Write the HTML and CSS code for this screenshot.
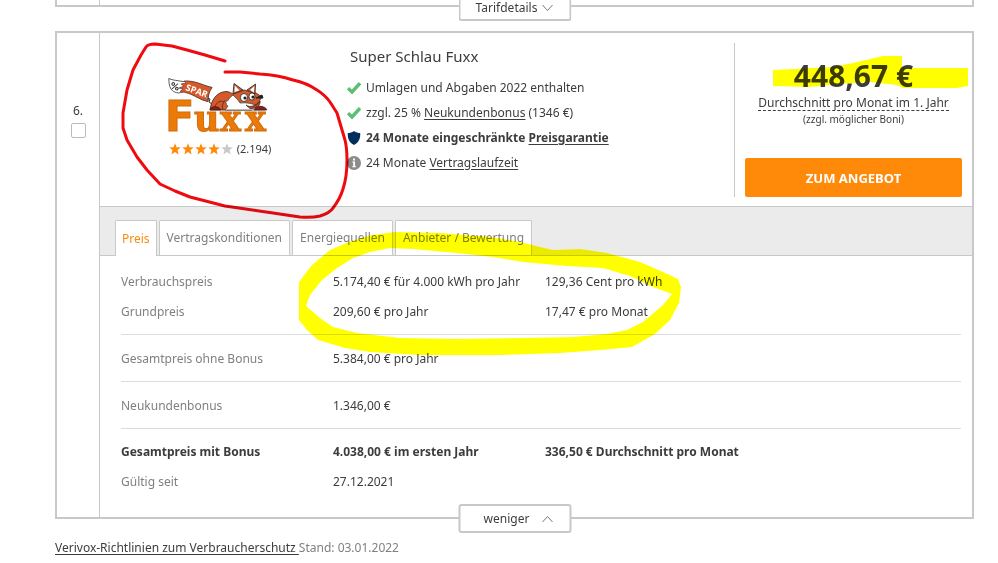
FILE: index.html
```html
<!DOCTYPE html>
<html lang="de">
<head>
  <meta charset="UTF-8">
  <meta name="viewport" content="width=device-width, initial-scale=1.0">
  <title>Stromtarife im Vergleich</title>
  <link rel="stylesheet" href="styles.css">
</head>
<body>
  <!-- Shared icons -->
  <svg class="icon-defs" aria-hidden="true">
    <symbol id="icon-check" viewBox="0 0 14 12">
      <path d="M1 6.200 L5 10 L13 1.200" fill="none" stroke="#5cbf72" stroke-width="3.400"/>
    </symbol>
    <symbol id="icon-shield" viewBox="0 0 14 14">
      <path d="M7 0 C9 1.500 11 2 13.200 2 C13.600 7.500 11.500 11.800 7 14 C2.500 11.800 .4 7.500 .8 2 C3 2 5 1.500 7 0Z" fill="#002f5f"/>
    </symbol>
    <symbol id="icon-info" viewBox="0 0 14 14">
      <circle cx="7" cy="7" r="7" fill="#8c8c8c"/>
      <path d="M5.300 5.600 H8 V10.300 H9 V11.300 H5.200 V10.300 H6.200 V6.600 H5.300Z M6 2.600 H8 V4.400 H6Z" fill="#fff"/>
    </symbol>
    <symbol id="icon-star" viewBox="0 0 12 12">
      <path d="M6 .2 L7.500 4.200 L11.800 4.400 L8.500 7.100 L9.600 11.400 L6 9 L2.400 11.400 L3.500 7.100 L.2 4.400 L4.500 4.200Z"/>
    </symbol>
    <symbol id="icon-down" viewBox="0 0 12 8">
      <path d="M1 1 L6 6.500 L11 1" fill="none" stroke="#777" stroke-width="1"/>
    </symbol>
    <symbol id="icon-up" viewBox="0 0 12 8">
      <path d="M1 7 L6 1.500 L11 7" fill="none" stroke="#777" stroke-width="1"/>
    </symbol>
  </svg>

  <main class="results">
    <article class="card card-previous">
      <div class="rank"></div>
      <button class="toggle-btn toggle-more" type="button">Tarifdetails <svg class="arrow"><use href="#icon-down"/></svg></button>
    </article>

    <article class="card">
      <div class="rank">
        <label for="compare-6">6.</label>
        <input type="checkbox" id="compare-6" class="compare">
      </div>

      <div class="tariff">
        <div class="summary">
          <div class="provider">
            <svg class="logo" viewBox="0 0 104 58" role="img" aria-label="Spar Fuxx">
              <!-- wordmark -->
              <text class="logo-f" x="-3" y="55">F</text>
              <text class="logo-uxx" x="26 52 77" y="55">uxx</text>
              <!-- tail -->
              <path d="M.8 2.500 C5 4.500 10 4.500 15 5.500 C26 4 36 10 44 11.500 C41 15 40 20 40 25.500 C31 24 25 17 16 15.500 C11 18 6 17 3 13 C1 10 1 6 .8 2.500Z" fill="#fff" stroke="#333" stroke-width=".8"/>
              <path d="M16 5 C27 4 36 10 44 11.500 C41 15 40 20 40 25.500 C31 24 25 17 12 15.500 L15 13 L11 12 L16 10 L13 8 L18 7Z" fill="#d4592b" stroke="#5c2a18" stroke-width=".6"/>
              <text class="logo-percent" transform="rotate(18 2 11)" x="2" y="12">%</text>
              <text class="logo-spar" transform="rotate(20 17 14)" x="17" y="14">SPAR</text>
              <circle cx="39" cy="22" r="1.200" fill="#fff" stroke="#333" stroke-width=".6"/>
              <path d="M39 22 L42 23 L41 26 L44 28" fill="none" stroke="#333" stroke-width="1"/>
              <!-- fox -->
              <path d="M42 34 C43 25 48 16 58 15.500 C61 15.500 63 17 65 18 L76 14 L88 17 L94 21 L90 27 L84 34Z" fill="#d4592b" stroke="#42231a" stroke-width=".8"/>
              <path d="M47 31 C48 26 53 24 56 26 C54 29 54 31 55 34" fill="none" stroke="#42231a" stroke-width=".7"/>
              <path d="M65 18 L66 7.500 L75 14Z M79 14 L87.500 8 L87 18Z" fill="#d4592b" stroke="#333" stroke-width=".9"/>
              <path d="M66.500 16 L66.800 9.500 L71.500 14.500Z M82 14 L86.500 10 L85.800 16.500Z" fill="#fff"/>
              <path d="M65 19 C58 24 62 26 56 25 C60 27 57 29 60 30 L57 34 H97 C96 30 92 31 88 29 C84 28 79 26 72 27 L70 24Z" fill="#fff" stroke="#333" stroke-width=".7"/>
              <ellipse cx="76" cy="21.500" rx="3.600" ry="4" fill="#fff" stroke="#222" stroke-width=".8"/>
              <ellipse cx="84" cy="20.500" rx="3" ry="3.600" fill="#fff" stroke="#222" stroke-width=".8"/>
              <circle cx="77" cy="22" r="1.600" fill="#222"/>
              <circle cx="85" cy="21" r="1.600" fill="#222"/>
              <path d="M88 22 L94 19 L95 22Z" fill="#222" stroke="#222" stroke-width="1"/>
              <path d="M78 29 C82 32 88 30 92 25 C93 29 88 33 82 32.500Z" fill="#b8432b" stroke="#222" stroke-width=".7"/>
              <path d="M42 34 C42 30 50 29 53 34Z M86 34 C88 29 97 29 99 34Z" fill="#84201b" stroke="#3c1512" stroke-width=".6"/>
            </svg>
            <div class="rating">
              <svg class="star"><use href="#icon-star"/></svg>
              <svg class="star"><use href="#icon-star"/></svg>
              <svg class="star"><use href="#icon-star"/></svg>
              <svg class="star"><use href="#icon-star"/></svg>
              <svg class="star star-empty"><use href="#icon-star"/></svg>
              <span class="votes">(2.194)</span>
            </div>
          </div>

          <div class="product">
            <h2>Super Schlau Fuxx</h2>
            <ul class="features">
              <li><svg class="icon"><use href="#icon-check"/></svg><span>Umlagen und Abgaben 2022 enthalten</span></li>
              <li><svg class="icon"><use href="#icon-check"/></svg><span>zzgl. 25 % <a href="#bonus">Neukundenbonus</a> (1346 €)</span></li>
              <li class="strong"><svg class="icon"><use href="#icon-shield"/></svg><span>24 Monate eingeschränkte <a href="#garantie">Preisgarantie</a></span></li>
              <li><svg class="icon"><use href="#icon-info"/></svg><span>24 Monate <a href="#laufzeit">Vertragslaufzeit</a></span></li>
            </ul>
          </div>

          <div class="price">
            <strong class="amount">448,67 €</strong>
            <span class="average">Durchschnitt pro Monat im 1. Jahr</span>
            <small>(zzgl. möglicher Boni)</small>
            <button class="offer-btn" type="button">ZUM ANGEBOT</button>
          </div>
        </div>

        <div class="tabs" role="tablist">
          <button class="tab active" type="button" role="tab" aria-selected="true">Preis</button>
          <button class="tab" type="button" role="tab" aria-selected="false">Vertragskonditionen</button>
          <button class="tab" type="button" role="tab" aria-selected="false">Energiequellen</button>
          <button class="tab" type="button" role="tab" aria-selected="false">Anbieter / Bewertung</button>
        </div>

        <div class="panel" role="tabpanel">
          <table>
            <tbody>
              <tr><th scope="row">Verbrauchspreis</th><td>5.174,40 € für 4.000 kWh pro Jahr</td><td>129,36 Cent pro kWh</td></tr>
              <tr><th scope="row">Grundpreis</th><td>209,60 € pro Jahr</td><td>17,47 € pro Monat</td></tr>
            </tbody>
            <tbody>
              <tr><th scope="row">Gesamtpreis ohne Bonus</th><td>5.384,00 € pro Jahr</td><td></td></tr>
            </tbody>
            <tbody>
              <tr><th scope="row">Neukundenbonus</th><td>1.346,00 €</td><td></td></tr>
            </tbody>
            <tbody>
              <tr class="total"><th scope="row">Gesamtpreis mit Bonus</th><td>4.038,00 € im ersten Jahr</td><td>336,50 € Durchschnitt pro Monat</td></tr>
              <tr><th scope="row">Gültig seit</th><td>27.12.2021</td><td></td></tr>
            </tbody>
          </table>
        </div>
      </div>
      <button class="toggle-btn toggle-less" type="button">weniger <svg class="arrow"><use href="#icon-up"/></svg></button>
    </article>

    <p class="guidelines"><a href="#richtlinien">Verivox-Richtlinien zum Verbraucherschutz </a>Stand: 03.01.2022</p>
  </main>

  <!-- Pen and highlighter marks -->
  <svg class="marks" width="998" height="563" viewBox="0 0 998 563" aria-hidden="true">
    <path class="marker" d="M773 70 L833 67 L853 63 L883 56 H902 V68 H968 V86 L957 88 H903 L897 85 L870 82 L837 84 L810 87 L773 86Z"/>
    <path class="marker" d="M299 290 V282 L312 265 L330 250 L349 242 L372 235 L395 232 L440 233 L490 237 L520 242 L540 247 L553 250 L580 249 L607 253 L640 262 L663 272 L678 279 L681 287 L679 303 L670 320 L655 334 L632 347 L600 350 L560 353 L500 355 H420 L370 352 L345 348 L318 340 L307 330 L299 320Z
      M306 306 L310 295 L322 280 L337 268 L353 258 L370 252 L390 248 L413 249 L457 253 L493 257 L523 262 L567 266 L603 268 L630 276 L653 287 L672 294 L663 305 L643 322 L627 330 L607 334 L573 337 L523 338 L457 339 L400 338 L357 333 L333 327 L320 318Z"/>
    <path class="pen" d="M225 61 L205 55 L187 50 L172 46 L155 44 Q148 44 146 47 L141 55 L133 70 L127 90 L123 113 V128 L127 140 L137 157 L147 170 L160 184 L175 191 L190 197 L225 206 L273 213 L300 217 Q312 218 320 216 Q330 213 333 208 Q340 199 343 189 Q347 177 347 160 Q347 148 345 140 L337 113 L330 102 Q325 95 317 90 Q307 83 293 80 Q278 75 260 74 L240 72 H225"/>
  </svg>
</body>
</html>
```

FILE: styles.css
```css
/* Global Styles */
* {
  box-sizing: border-box;
}

body {
  position: relative;
  margin: 0;
  background-color: #fff;
  color: #3c3c3c;
  font-family: 'Noto Sans', 'Open Sans', sans-serif;
  font-size: 12px;
  line-height: 16px;
}

button,
input {
  font: inherit;
  color: inherit;
}

button {
  cursor: pointer;
}

a {
  color: inherit;
  text-underline-offset: 2px;
}

.icon-defs {
  display: none;
}

.results {
  padding: 0 24px 0 55px;
}

/* Tariff Card */
.card {
  position: relative;
  display: flex;
  margin-bottom: 21px;
  border: 2px solid #c8c8c8;
}

.card-previous {
  height: 7px;
  margin-bottom: 24px;
  border-top: none;
}

.rank {
  display: flex;
  flex-direction: column;
  align-items: center;
  gap: 4px;
  width: 43px;
  border-right: 1px solid #c8c8c8;
}

.rank label {
  margin-top: 70px;
}

.compare {
  appearance: none;
  width: 15px;
  height: 15px;
  margin: 0;
  border: 1px solid #bbb;
  border-radius: 2px;
  background-color: #fff;
}

.tariff {
  flex: 1;
}

.toggle-btn {
  position: absolute;
  left: 50%;
  bottom: -16px;
  transform: translateX(-50%);
  display: flex;
  align-items: center;
  justify-content: center;
  gap: 4px;
  width: 113px;
  height: 29px;
  padding: 0;
  border: 2px solid #c8c8c8;
  border-radius: 3px;
  background-color: #fff;
}

.toggle-more {
  height: 24px;
  border-top: none;
}

.toggle-less {
  gap: 12px;
  padding-left: 8px;
}

.arrow {
  width: 12px;
  height: 8px;
}

/* Summary */
.summary {
  display: grid;
  grid-template-columns: 240px 1fr 238px;
}

.provider {
  display: flex;
  flex-direction: column;
  align-items: center;
  padding-top: 43px;
}

.logo {
  width: 104px;
  height: 58px;
  overflow: visible;
}

.logo text {
  font-family: 'DejaVu Sans', sans-serif;
  font-weight: bold;
}

.logo .logo-percent {
  font-size: 9px;
  fill: #222;
}

.logo .logo-spar {
  font-family: 'Open Sans', sans-serif;
  font-size: 9px;
  fill: #fff;
}

.logo .logo-f,
.logo .logo-uxx {
  fill: #ec7a08;
  stroke: #d06c0c;
  stroke-width: 1px;
}

.logo .logo-f {
  font-size: 43px;
}

.logo .logo-uxx {
  font-family: 'DejaVu Serif', serif;
  font-size: 35px;
}

.rating {
  display: flex;
  align-items: center;
  gap: 1px;
  margin-top: 7px;
}

.star {
  width: 12px;
  height: 12px;
  fill: #ff8a0a;
}

.star-empty {
  fill: #c8c8c8;
}

.votes {
  margin-left: 3px;
  font-size: 11px;
}

.product {
  padding: 11px 0 0 7px;
}

.product h2 {
  margin: 0 0 7px 3px;
  font-size: 15px;
  font-weight: normal;
  line-height: 24px;
}

.features {
  margin: 0;
  padding: 0;
  list-style: none;
}

.features li {
  display: flex;
  align-items: center;
  gap: 5px;
  height: 25px;
}

.features .strong {
  font-weight: bold;
}

.icon {
  width: 14px;
  height: 14px;
}

.price {
  display: flex;
  flex-direction: column;
  align-items: center;
  margin: 10px 0 9px;
  padding: 12px 10px 0;
  border-left: 1px solid #c8c8c8;
}

.amount {
  font-size: 30px;
  line-height: 41px;
}

.average {
  border-bottom: 1px dashed #3c3c3c;
  line-height: 14px;
}

.price small {
  font-size: 10px;
}

.offer-btn {
  width: 100%;
  height: 39px;
  margin-top: 31px;
  border: none;
  border-radius: 2px;
  background-color: #ff8a0a;
  color: #fff;
  font-size: 13px;
  font-weight: bold;
}

/* Tabs */
.tabs {
  display: flex;
  gap: 2px;
  padding: 13px 15px 0;
  border-top: 1px solid #c8c8c8;
  border-bottom: 1px solid #c8c8c8;
  background-color: #ebebeb;
}

.tab {
  height: 35px;
  padding: 0 7px;
  border: 1px solid #c8c8c8;
  border-bottom: none;
  border-radius: 2px 2px 0 0;
  background-color: #fff;
  color: #808080;
}

.tab.active {
  height: 36px;
  margin-bottom: -1px;
  padding: 0 6px;
  color: #ff8a0a;
}

/* Price Table */
.panel {
  padding: 2px 11px 13px 21px;
}

table {
  width: 100%;
  border-collapse: collapse;
  table-layout: fixed;
}

th,
td {
  height: 30px;
  padding: 2px 0 0;
  text-align: left;
}

th {
  width: 212px;
  color: #808080;
  font-weight: normal;
}

th + td {
  width: 212px;
}

tbody tr:first-child > * {
  height: 38px;
  padding-top: 10px;
}

tbody tr:last-child > * {
  height: 38px;
  padding-bottom: 8px;
}

tbody tr:only-child > * {
  height: 47px;
}

tbody + tbody {
  border-top: 1px solid #dcdcdc;
}

.total > * {
  color: #3c3c3c;
  font-weight: bold;
}

/* Footer */
.guidelines {
  margin: 0;
  color: #808080;
}

.guidelines a {
  color: #3c3c3c;
  white-space: pre;
}

/* Marks */
.marks {
  position: absolute;
  top: 0;
  left: 0;
  pointer-events: none;
  mix-blend-mode: multiply;
}

.marker {
  fill: #ffff00;
  fill-rule: evenodd;
}

.pen {
  fill: none;
  stroke: #f00a10;
  stroke-width: 3px;
  stroke-linecap: round;
  stroke-linejoin: round;
}
```
